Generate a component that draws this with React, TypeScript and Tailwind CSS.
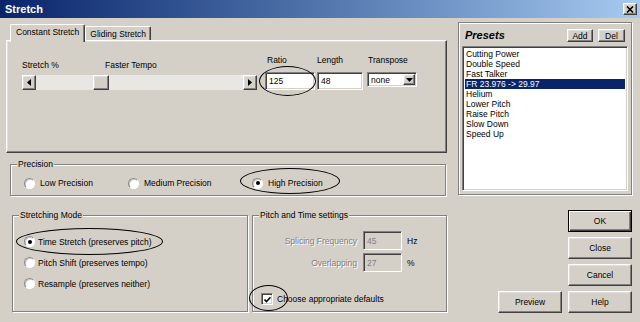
import React from "react";

const raised =
  "border border-t-white border-l-white border-r-[#404040] border-b-[#404040] shadow-[inset_-1px_-1px_0_#808080,inset_1px_1px_0_#dfdfdf]";
const sunken =
  "border border-t-[#808080] border-l-[#808080] border-r-white border-b-white shadow-[inset_1px_1px_0_#404040,inset_-1px_-1px_0_#d4d0c8]";
const etched =
  "border border-[#808080] shadow-[1px_1px_0_#fff,inset_1px_1px_0_#fff]";

const presets = [
  "Cutting Power",
  "Double Speed",
  "Fast Talker",
  "FR 23.976 -> 29.97",
  "Helium",
  "Lower Pitch",
  "Raise Pitch",
  "Slow Down",
  "Speed Up",
];

function Radio({ checked }: { checked?: boolean }) {
  return (
    <span className="flex h-[11px] w-[11px] shrink-0 items-center justify-center rounded-full border border-t-[#8a8a8a] border-l-[#8a8a8a] border-r-white border-b-white bg-white shadow-[inset_1px_1px_0_#c8c8c8]">
      {checked && <span className="h-[4px] w-[4px] rounded-full bg-black" />}
    </span>
  );
}

function Arrow({ dir }: { dir: "left" | "right" }) {
  return (
    <span className={`flex h-[15px] w-[14px] shrink-0 items-center justify-center bg-[#d4d0c8] ${raised}`}>
      <svg width="4" height="7" viewBox="0 0 4 7">
        {dir === "left" ? <polygon points="4,0 0,3.5 4,7" fill="#000" /> : <polygon points="0,0 4,3.5 0,7" fill="#000" />}
      </svg>
    </span>
  );
}

function Button({ label, main, w = "w-[64px]" }: { label: string; main?: boolean; w?: string }) {
  return (
    <div
      className={`flex h-[22px] ${w} items-center justify-center bg-[#d4d0c8] ${
        main
          ? "border border-black shadow-[inset_1px_1px_0_#fff,inset_-1px_-1px_0_#404040,inset_-2px_-2px_0_#808080]"
          : raised
      }`}
    >
      {label}
    </div>
  );
}

function Group({ title, className, children }: { title: string; className: string; children: React.ReactNode }) {
  return (
    <div className={`relative ${etched} ${className}`}>
      <span className="absolute -top-[6px] left-[6px] bg-[#d4d0c8] px-[1px]">{title}</span>
      {children}
    </div>
  );
}

export default function App() {
  return (
    <div className="relative h-[322px] w-[640px] overflow-hidden bg-[#d4d0c8] font-['Liberation_Sans',Arial,sans-serif] text-[8.5px] leading-[10px] text-black">
      {/* title bar */}
      <div className="flex h-[18px] items-center justify-between bg-linear-to-r from-[#0a246a] to-[#a6caf0] pl-[5px] pr-[3px]">
        <span className="text-[11px] font-bold leading-[14px] text-white">Stretch</span>
        <span className={`flex h-[12px] w-[14px] items-center justify-center bg-[#d4d0c8] ${raised}`}>
          <svg width="8" height="7" viewBox="0 0 8 7">
            <path d="M1 0.5 L7 6.5 M7 0.5 L1 6.5" stroke="#000" strokeWidth="1.6" />
          </svg>
        </span>
      </div>

      <div className="flex">
        {/* left column */}
        <div className="ml-[6px] flex w-[441px] flex-col pt-[6px]">
          <div className="flex h-[16px] items-end pl-[4px]">
            <div className="relative z-10 -mb-[2px] h-[18px] rounded-t-[2px] border-t border-l border-r border-t-white border-l-white border-r-[#404040] bg-[#d4d0c8] px-[5px] pt-[2px] shadow-[inset_-1px_0_0_#808080]">
              Constant Stretch
            </div>
            <div className="h-[14px] rounded-t-[2px] border-t border-l border-r border-t-white border-l-white border-r-[#404040] px-[4px] pt-[2px] shadow-[inset_-1px_0_0_#808080]">
              Gliding Stretch
            </div>
          </div>
          <div className={`h-[113px] ${raised}`}>
            <div className="flex items-start pl-[15px] pt-[14px]">
              <div className="mt-[5px] flex w-[235px] flex-col">
                <div className="flex h-[10px]">
                  <span className="w-[83px]">Stretch %</span>
                  <span>Faster Tempo</span>
                </div>
                <div className="mt-[5px] flex h-[15px]">
                  <Arrow dir="left" />
                  <div className="flex flex-1 bg-[#e9e7e3] pl-[57px]">
                    <span className={`h-[15px] w-[16px] bg-[#d4d0c8] ${raised}`} />
                  </div>
                  <Arrow dir="right" />
                </div>
              </div>
              <div className="ml-[8px] flex">
                <div className="flex w-[50px] flex-col">
                  <span className="pl-[2px]">Ratio</span>
                  <div className={`mt-[7px] flex h-[18px] items-center bg-white pl-[3px] ${sunken}`}>125</div>
                </div>
                <div className="ml-[2px] flex w-[46px] flex-col">
                  <span>Length</span>
                  <div className={`mt-[7px] flex h-[18px] items-center bg-white pl-[3px] ${sunken}`}>48</div>
                </div>
                <div className="ml-[4px] flex w-[50px] flex-col">
                  <span className="pl-[1px]">Transpose</span>
                  <div className={`mt-[7px] flex h-[15px] items-center bg-white pl-[3px] ${sunken}`}>
                    <span className="flex-1">none</span>
                    <span className={`mr-[1px] flex h-[11px] w-[12px] items-center justify-center bg-[#d4d0c8] ${raised}`}>
                      <svg width="7" height="4" viewBox="0 0 7 4">
                        <polygon points="0,0 7,0 3.5,4" fill="#000" />
                      </svg>
                    </span>
                  </div>
                </div>
              </div>
            </div>
          </div>

          <Group title="Precision" className="ml-[4px] mt-[11px] h-[32px] w-[436px]">
            <div className="flex h-full items-center pl-[13px] pt-[6px]">
              <div className="flex w-[104px] items-center gap-[5px]">
                <Radio />
                <span>Low Precision</span>
              </div>
              <div className="flex w-[124px] items-center gap-[5px]">
                <Radio />
                <span>Medium Precision</span>
              </div>
              <div className="flex items-center gap-[5px]">
                <Radio checked />
                <span>High Precision</span>
              </div>
            </div>
          </Group>

          <div className="mt-[19px] flex">
            <Group title="Stretching Mode" className="ml-[6px] h-[97px] w-[236px]">
              <div className="flex flex-col gap-[10px] pl-[11px] pt-[20px]">
                <div className="flex items-center gap-[3px]">
                  <Radio checked />
                  <span>Time Stretch (preserves pitch)</span>
                </div>
                <div className="flex items-center gap-[3px]">
                  <Radio />
                  <span>Pitch Shift (preserves tempo)</span>
                </div>
                <div className="flex items-center gap-[3px]">
                  <Radio />
                  <span>Resample (preserves neither)</span>
                </div>
              </div>
            </Group>
            <Group title="Pitch and Time settings" className="ml-[4px] h-[97px] w-[195px]">
              <div className="flex flex-col pt-[15px]">
                <div className="flex h-[19px] items-center">
                  <span className="w-[104px] text-right text-[#808080] [text-shadow:1px_1px_0_#fff]">Splicing Frequency</span>
                  <div className={`ml-[6px] flex h-[19px] w-[39px] items-center pl-[3px] text-[#808080] ${sunken}`}>45</div>
                  <span className="ml-[5px]">Hz</span>
                </div>
                <div className="mt-[3px] flex h-[19px] items-center">
                  <span className="w-[104px] text-right text-[#808080] [text-shadow:1px_1px_0_#fff]">Overlapping</span>
                  <div className={`ml-[6px] flex h-[19px] w-[39px] items-center pl-[3px] text-[#808080] ${sunken}`}>27</div>
                  <span className="ml-[5px]">%</span>
                </div>
                <div className="mt-[21px] flex items-center gap-[4px] pl-[8px]">
                  <span className={`flex h-[12px] w-[12px] items-center justify-center bg-white ${sunken}`}>
                    <svg width="7" height="7" viewBox="0 0 7 7">
                      <path d="M0.5 3.5 L2.5 5.5 L6.5 1.2" stroke="#000" strokeWidth="1.6" fill="none" />
                    </svg>
                  </span>
                  <span>Choose appropriate defaults</span>
                </div>
              </div>
            </Group>
          </div>
        </div>

        {/* right column */}
        <div className="ml-[11px] flex w-[174px] flex-col pt-[4px]">
          <div className={`flex h-[173px] flex-col ${etched}`}>
            <div className="mt-[6px] flex h-[13px] items-center pl-[6px] pr-[6px]">
              <span className="text-[11px] font-bold italic leading-[13px]">Presets</span>
              <span className={`ml-auto flex h-[13px] w-[26px] items-center justify-center ${raised}`}>Add</span>
              <span className={`ml-[5px] flex h-[13px] w-[27px] items-center justify-center ${raised}`}>Del</span>
            </div>
            <div className={`mx-[3px] mt-[4px] h-[145px] bg-white p-[2px] ${sunken}`}>
              {presets.map((p, i) => (
                <div key={p} className={`h-[10px] pl-[1px] ${i === 3 ? "bg-[#0a246a] text-white" : ""}`}>
                  {p}
                </div>
              ))}
            </div>
          </div>
          <div className="mt-[15px] flex flex-col items-end gap-[5px]">
            <Button label="OK" main />
            <Button label="Close" />
            <Button label="Cancel" />
            <div className="flex gap-[6px]">
              <Button label="Preview" />
              <Button label="Help" />
            </div>
          </div>
        </div>
      </div>

      {/* hand-drawn highlight ellipses */}
      <span className="pointer-events-none absolute left-[259px] top-[66px] h-[30px] w-[57px] rounded-[50%] border-[1.5px] border-black" />
      <span className="pointer-events-none absolute left-[240px] top-[168px] h-[26px] w-[100px] rounded-[50%] border-[1.5px] border-black" />
      <span className="pointer-events-none absolute left-[16px] top-[228px] h-[27px] w-[147px] rounded-[50%] border-[1.5px] border-black" />
      <span className="pointer-events-none absolute left-[249px] top-[285px] h-[26px] w-[39px] rounded-[50%] border-[1.5px] border-black" />
    </div>
  );
}
